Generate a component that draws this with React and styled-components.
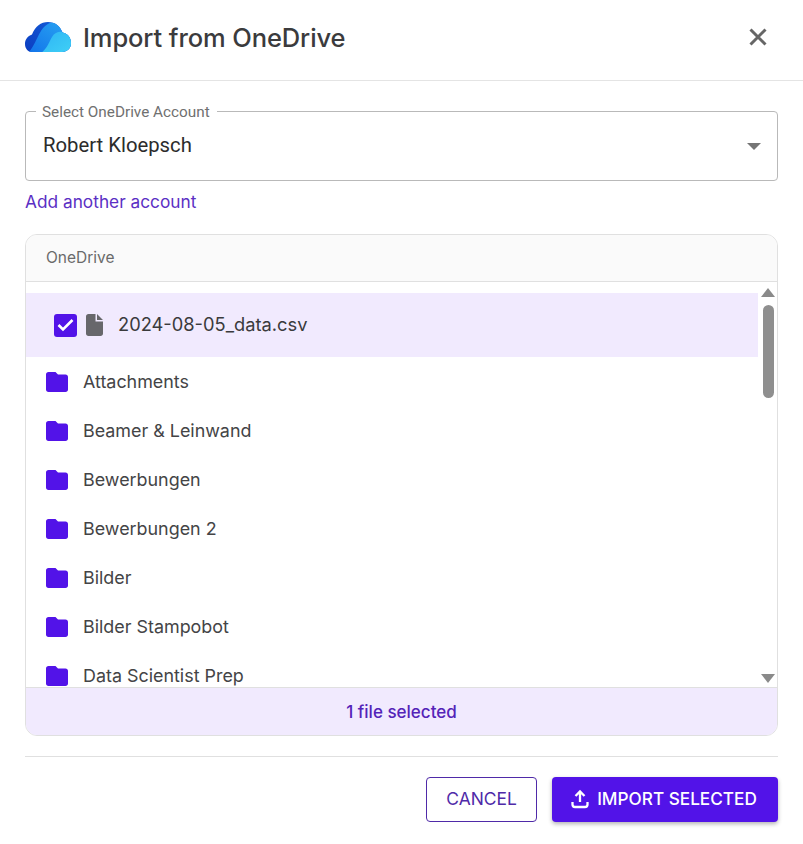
import React from 'react';
import styled, { createGlobalStyle } from 'styled-components';

const GlobalStyle = createGlobalStyle`
    html, body {
        margin: 0;
        padding: 0;
        background: #fff;
    }
    * {
        box-sizing: border-box;
    }
`
const Dialog = styled.div`
    width: 803px;
    height: 844px;
    background: #fff;
    font-family: Inter, "Liberation Sans", sans-serif;
    color: #3a3a3c;
    overflow: hidden;
`
const Header = styled.header`
    height: 81px;
    display: flex;
    align-items: center;
    padding: 0 32px 6px 25px;
    border-bottom: 1px solid #e4e4e4;
`
const Title = styled.h1`
    margin: 0 0 0 12px;
    flex: 1;
    font-size: 25.5px;
    font-weight: 500;
    letter-spacing: -0.1px;
    color: #3b3b3d;
`
const CloseButton = styled.button`
    width: 26px;
    height: 26px;
    padding: 0;
    border: none;
    background: transparent;
    display: flex;
`
const Body = styled.div`
    padding: 30px 25px 0;
`
const SelectBox = styled.fieldset`
    margin: 0;
    height: 70px;
    padding: 0 16px 0 17px;
    border: 1px solid #b9b9b9;
    border-radius: 4px;
    display: flex;
    align-items: center;
    justify-content: space-between;
    position: relative;
`
const SelectLabel = styled.legend`
    position: absolute;
    top: -8px;
    left: 10px;
    padding: 0 7px 0 6px;
    background: #fff;
    font-family: Roboto, sans-serif;
    font-size: 15.3px;
    line-height: 16px;
    color: #707070;
`
const SelectValue = styled.span`
    font-family: Roboto, sans-serif;
    font-size: 20.3px;
    line-height: 24px;
    margin-top: -3px;
    color: #2c2c2c;
`
const Caret = styled.span`
    width: 0;
    height: 0;
    border-left: 7px solid transparent;
    border-right: 7px solid transparent;
    border-top: 7px solid #757575;
`
const AddLink = styled.a`
    display: block;
    margin-top: 11px;
    font-size: 17.3px;
    line-height: 20px;
    color: #5b2fc4;
`
const Panel = styled.section`
    margin-top: 22px;
    height: 502px;
    border: 1px solid #e0e0e0;
    border-radius: 12px;
    overflow: hidden;
    display: flex;
    flex-direction: column;
`
const PanelHeader = styled.div`
    height: 47px;
    flex: none;
    display: flex;
    align-items: center;
    padding: 0 0 2px 20px;
    background: #fafafa;
    border-bottom: 1px solid #e0e0e0;
    font-size: 15.5px;
    color: #6a6a6a;
`
const PanelMiddle = styled.div`
    flex: 1;
    min-height: 0;
    display: flex;
`
const FileList = styled.div`
    flex: 1;
    min-width: 0;
    padding-top: 11px;
    overflow: hidden;
`
const FileRow = styled.div`
    height: 64px;
    display: flex;
    align-items: center;
    padding-left: 28px;
    background: #f1eafe;
    font-size: 18.3px;
`
const Check = styled.span`
    width: 23px;
    height: 23px;
    border-radius: 3px;
    background: #5213e8;
    display: flex;
    align-items: center;
    justify-content: center;
`
const FileName = styled.span`
    margin-left: 15px;
    margin-top: -2px;
    color: #3a3a3c;
`
const FolderRow = styled.div`
    height: 49px;
    display: flex;
    align-items: center;
    gap: 15px;
    padding-left: 20px;
    font-size: 17.9px;
    color: #444446;
`
const FolderLabel = styled.span`
    margin-top: -1px;
`
const Scrollbar = styled.div`
    width: 20px;
    flex: none;
    padding: 6px 0 4px;
    display: flex;
    flex-direction: column;
    align-items: center;
    margin-right: -1px;
`
const ArrowUp = styled.span`
    width: 0;
    height: 0;
    border-left: 7px solid transparent;
    border-right: 7px solid transparent;
    border-bottom: 9px solid #8a8a8a;
`
const ArrowDown = styled(ArrowUp)`
    border-bottom: none;
    border-top: 9px solid #8a8a8a;
    margin-top: auto;
`
const Thumb = styled.span`
    width: 11px;
    height: 93px;
    margin-top: 8px;
    border-radius: 6px;
    background: #8f8f8f;
`
const PanelFooter = styled.div`
    height: 48px;
    flex: none;
    display: flex;
    align-items: center;
    justify-content: center;
    background: #f1eafe;
    border-top: 1px solid #e0e0e0;
    font-size: 17px;
    font-weight: 500;
    color: #5423b8;
`
const Divider = styled.hr`
    margin: 20px 0 20px;
    border: none;
    border-top: 1px solid #e0e0e0;
`
const Actions = styled.div`
    display: flex;
    justify-content: flex-end;
    gap: 15px;
`
const Button = styled.button`
    height: 45px;
    padding: 0 ${props => props.$primary ? 2 : 0}px 2px 0;
    border-radius: 4px;
    font-family: Inter, "Liberation Sans", sans-serif;
    font-size: ${props => props.$primary ? 17.2 : 17.4}px;
    font-weight: ${props => props.$primary ? 500 : 400};
    display: flex;
    align-items: center;
    justify-content: center;
    gap: 8px;
    width: ${props => props.$width}px;
    color: ${props => props.$primary ? '#fff' : '#4f2aa8'};
    background: ${props => props.$primary ? '#5213e8' : '#fff'};
    border: ${props => props.$primary ? 'none' : '1px solid #4f2aa8'};
    box-shadow: ${props => props.$primary ? '0 2px 4px rgba(0,0,0,.3)' : 'none'};
`

const folders = [
    'Attachments',
    'Beamer & Leinwand',
    'Bewerbungen',
    'Bewerbungen 2',
    'Bilder',
    'Bilder Stampobot',
    'Data Scientist Prep',
]

const CloudLogo = () => (
    <svg width="46" height="31" viewBox="0 0 46 31">
        <defs>
            <clipPath id="cloudShape">
                <path d="M7 30C3 30 0 26.500 0 22C0 17.500 2.500 14 7 12.500C10 4.500 16 0 23 0C30 0 35 4 37.500 10.500C42.500 11.500 46 15.500 46 21C46 26.500 42 30 37 30Z" />
            </clipPath>
            <linearGradient id="cloudDark" x1="0" y1="1" x2="1" y2="0">
                <stop offset="0" stopColor="#0b3cc0" />
                <stop offset="1" stopColor="#1560da" />
            </linearGradient>
            <linearGradient id="cloudMid" x1="0" y1="1" x2="1" y2="0">
                <stop offset="0" stopColor="#1274ea" />
                <stop offset="1" stopColor="#2aa6f2" />
            </linearGradient>
            <linearGradient id="cloudLight" x1="0" y1="0" x2="1" y2="1">
                <stop offset="0" stopColor="#2fb4f4" />
                <stop offset="1" stopColor="#3fd0f6" />
            </linearGradient>
        </defs>
        <g clipPath="url(#cloudShape)">
            <rect width="46" height="31" fill="url(#cloudDark)" />
            <path d="M3 31C9 25 11 17 16 9C19 4 24 0 30 0H46V31Z" fill="url(#cloudMid)" />
            <path d="M16 31C22 27 24 20 27 15C30 10 35 9 39 10.500L46 12V31Z" fill="url(#cloudLight)" />
        </g>
    </svg>
)

const FolderIcon = () => (
    <svg width="22" height="20" viewBox="0 0 22 20" fill="#5213e8">
        <path d="M2.500 0H9.500L12 2.500H19.500C21 2.500 22 3.500 22 5V17.500C22 19 21 20 19.500 20H2.500C1 20 0 19 0 17.500V2.500C0 1 1 0 2.500 0Z" />
    </svg>
)

const FileIcon = () => (
    <svg width="17" height="22" viewBox="0 0 17 22" fill="#67676b" style={{ marginLeft: 9 }}>
        <path d="M2.500 0C1 0 0 1 0 2.500v17C0 21 1 22 2.500 22h12c1.500 0 2.500-1 2.500-2.500V7.500H9.500V0zM11 0v6h6z" />
    </svg>
)

const UploadIcon = () => (
    <svg width="18" height="20" viewBox="0 0 18 20" fill="none" stroke="#fff" strokeWidth="2.300">
        <path d="M9 13V3M4.500 7 9 2.500 13.500 7M1.500 13v2.500c0 1.500 1 2.500 2.500 2.500h10c1.500 0 2.500-1 2.500-2.500V13" />
    </svg>
)

class App extends React.Component {
    render(){
    return (
        <Dialog>
            <GlobalStyle />
            <Header>
                <CloudLogo />
                <Title>Import from OneDrive</Title>
                <CloseButton>
                    <svg width="26" height="26" viewBox="0 0 26 26" fill="none" stroke="#666" strokeWidth="3">
                        <path d="M5.500 5.500 20.500 20.500M20.500 5.500 5.500 20.500" />
                    </svg>
                </CloseButton>
            </Header>
            <Body>
                <SelectBox>
                    <SelectLabel>Select OneDrive Account</SelectLabel>
                    <SelectValue>Robert Kloepsch</SelectValue>
                    <Caret />
                </SelectBox>
                <AddLink>Add another account</AddLink>
                <Panel>
                    <PanelHeader>OneDrive</PanelHeader>
                    <PanelMiddle>
                        <FileList>
                            <FileRow>
                                <Check>
                                    <svg width="17" height="14" viewBox="0 0 17 14" fill="none" stroke="#fff" strokeWidth="2.600">
                                        <path d="M1.500 7 6 11.500 15.500 2" />
                                    </svg>
                                </Check>
                                <FileIcon />
                                <FileName>2024-08-05_data.csv</FileName>
                            </FileRow>
                            {folders.map(name => (
                                <FolderRow key={name}>
                                    <FolderIcon />
                                    <FolderLabel>{name}</FolderLabel>
                                </FolderRow>
                            ))}
                        </FileList>
                        <Scrollbar>
                            <ArrowUp />
                            <Thumb />
                            <ArrowDown />
                        </Scrollbar>
                    </PanelMiddle>
                    <PanelFooter>1 file selected</PanelFooter>
                </Panel>
                <Divider />
                <Actions>
                    <Button $width={111}>CANCEL</Button>
                    <Button $primary $width={226}><UploadIcon />IMPORT SELECTED</Button>
                </Actions>
            </Body>
        </Dialog>
    );
}
}

export default App
